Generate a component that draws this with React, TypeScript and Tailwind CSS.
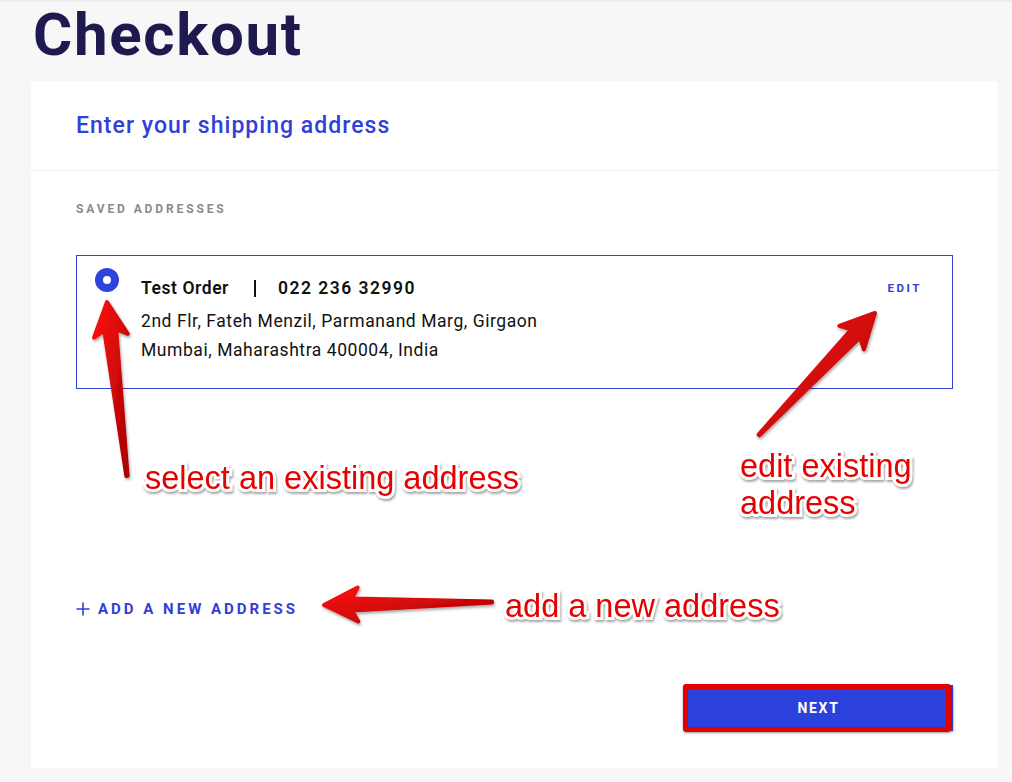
import React from "react";

type Pt = [number, number];

function arrowPoints(tail: Pt, tip: Pt): string {
  const [tx, ty] = tail;
  const [px, py] = tip;
  const L = Math.hypot(px - tx, py - ty);
  const dx = (px - tx) / L;
  const dy = (py - ty) / L;
  const nx = -dy;
  const ny = dx;
  const tw = 0.6;
  const nw = 6;
  const bw = 17;
  const neck = 28;
  const barb = 34;
  const p = (along: number, off: number): string =>
    `${(px - dx * along + nx * off).toFixed(1)},${(py - dy * along + ny * off).toFixed(1)}`;
  return [
    p(L, tw),
    p(neck, nw),
    p(barb, bw),
    p(0, 0),
    p(barb, -bw),
    p(neck, -nw),
    p(L, -tw),
  ].join(" ");
}

function Arrow({ tail, tip, id }: { tail: Pt; tip: Pt; id: string }) {
  return (
    <g filter="url(#arrowShadow)">
      <defs>
        <linearGradient id={id} x1="0" y1="0" x2="1" y2="1">
          <stop offset="0" stopColor="#ff1010" />
          <stop offset="1" stopColor="#a80000" />
        </linearGradient>
      </defs>
      <polygon
        points={arrowPoints(tail, tip)}
        fill={`url(#${id})`}
        stroke={`url(#${id})`}
        strokeWidth={4}
        strokeLinejoin="round"
      />
    </g>
  );
}

const noteCls =
  "absolute font-['Liberation_Sans',Arial,sans-serif] text-[32.5px] leading-[37px] text-[#e60000] whitespace-nowrap [-webkit-text-stroke:6px_#ffffff] [paint-order:stroke_fill] [filter:drop-shadow(1px_2px_1px_rgba(0,0,0,0.35))]";

export default function App() {
  return (
    <div className="relative w-full min-h-[782px] bg-[#f7f7f7] border-t-2 border-[#ececec] font-[Roboto,sans-serif] overflow-hidden">
      <h1 className="pl-[33px] pt-[3px] text-[60px] leading-[60px] font-bold text-[#1e1a50] tracking-[0.028em]">
        Checkout
      </h1>

      <div className="mt-[16px] ml-[31px] w-[967px] bg-white">
        <div className="h-[90px] flex items-center px-[45px] border-b border-[#f1f1f1]">
          <h2 className="text-[23px] leading-[28px] font-medium text-[#2f40d8] tracking-[0.045em]">
            Enter your shipping address
          </h2>
        </div>

        <div className="px-[45px] pt-[30px] pb-[37px]">
          <div className="text-[12px] leading-[16px] font-bold tracking-[0.24em] text-[#8a8a8a]">
            SAVED ADDRESSES
          </div>

          <div className="mt-[38px] h-[134px] border border-[#3043d6] flex pl-[18px] pt-[12px] pr-[30px]">
            <div className="w-[24px] h-[24px] rounded-full border-[8px] border-[#2f44dc] shrink-0" />
            <div className="ml-[22px] text-[#111] tracking-[0.035em]">
              <div className="mt-[8px] flex items-center text-[17.5px] leading-[24px] font-semibold">
                <span>Test Order</span>
                <span className="ml-[25px] mr-[22px] inline-block w-[2px] h-[17px] bg-[#111]" />
                <span className="tracking-[0.085em]">022 236 32990</span>
              </div>
              <div className="mt-[7px] text-[17.5px] leading-[29px]">
                <div>2nd Flr, Fateh Menzil, Parmanand Marg, Girgaon</div>
                <div>Mumbai, Maharashtra 400004, India</div>
              </div>
            </div>
            <div className="ml-auto mt-[12px] text-[11.5px] leading-[16px] font-bold tracking-[0.22em] text-[#2f40d8]">
              EDIT
            </div>
          </div>

          <div className="mt-[212px] flex items-center text-[#2f40d8]">
            <svg width="14" height="14" viewBox="0 0 14 14" className="shrink-0">
              <path d="M7 0.5V13.5M0.5 7H13.5" stroke="#2f40d8" strokeWidth="1.6" />
            </svg>
            <span className="ml-[8px] text-[15px] leading-[16px] font-bold tracking-[0.2em]">
              ADD A NEW ADDRESS
            </span>
          </div>

          <div className="mt-[68px] flex justify-end">
            <div className="relative">
              <button className="w-[269px] h-[46px] bg-[#2c40dc] text-white text-[14px] font-bold tracking-[0.12em] shadow-[1px_1px_2px_rgba(0,0,0,0.25)]">
                NEXT
              </button>
              <div className="absolute -left-[1px] -top-[1px] w-[268px] h-[48px] border-[5px] border-[#e30000] rounded-[3px] shadow-[0_1px_3px_rgba(0,0,0,0.35)] pointer-events-none" />
            </div>
          </div>
        </div>
      </div>

      <svg className="absolute left-0 top-0 pointer-events-none" width="1012" height="782" viewBox="0 0 1012 782">
        <defs>
          <filter id="arrowShadow" x="-20%" y="-20%" width="140%" height="140%">
            <feDropShadow dx="1" dy="2" stdDeviation="1.5" floodColor="#000" floodOpacity="0.35" />
          </filter>
        </defs>
        <Arrow id="g1" tail={[127, 474]} tip={[107, 300]} />
        <Arrow id="g2" tail={[759, 433]} tip={[875, 311]} />
        <Arrow id="g3" tail={[492, 600]} tip={[324, 603]} />
      </svg>

      <div className={noteCls + " left-[145px] top-[458px]"}>select an existing address</div>
      <div className={noteCls + " left-[740px] top-[446px]"}>
        edit existing
        <br />
        address
      </div>
      <div className={noteCls + " left-[505px] top-[586px]"}>add a new address</div>
    </div>
  );
}
